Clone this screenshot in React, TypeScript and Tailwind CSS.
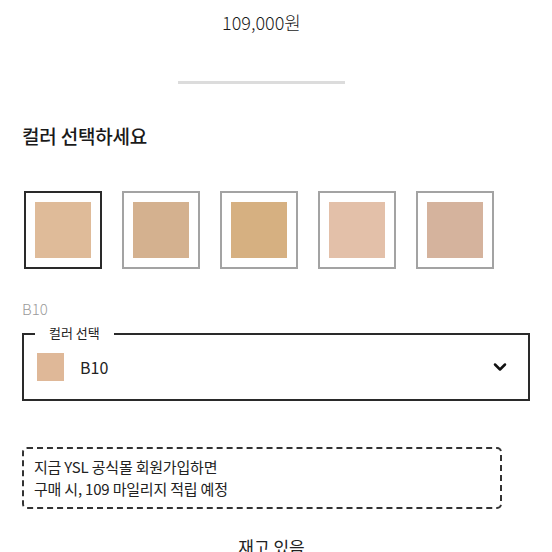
import React from 'react';
import { ChevronDown } from 'lucide-react';

const swatches = [
  { code: 'B10', color: '#dfbb99' },
  { code: 'B20', color: '#d4b18f' },
  { code: 'B30', color: '#d6b081' },
  { code: 'BR10', color: '#e3c0a9' },
  { code: 'BR20', color: '#d5b39d' },
];

const App = () => {
  const selected = 0;

  return (
    <div className="w-[552px] h-[552px] overflow-hidden bg-white text-[#1a1a1a] font-['Noto_Sans_CJK_KR','Noto_Sans',sans-serif]">
      {/* Price + divider */}
      <div className="w-[523px] flex flex-col items-center pt-[10px]">
        <p className="text-[18px] leading-[24px] font-light">109,000원</p>
        <div className="mt-[47px] w-[167px] h-[3px] bg-[#dcdcdc]"></div>
      </div>

      <div className="px-[22px]">
        <h2 className="mt-[40px] text-[19px] leading-[24px] font-medium tracking-[-0.2px]">컬러 선택하세요</h2>

        {/* Shade swatches */}
        <div className="mt-[43px] pl-[2px] flex gap-[20px]">
          {swatches.map((s, i) => (
            <button
              key={s.code}
              className={`w-[78px] h-[78px] border-2 bg-white flex items-center justify-center ${
                i === selected ? 'border-[#2a2a2a]' : 'border-[#a3a3a3]'
              }`}
            >
              <span className="w-[56px] h-[56px]" style={{ backgroundColor: s.color }}></span>
            </button>
          ))}
        </div>

        <p className="mt-[30px] text-[15px] leading-[20px] font-light text-[#9a9a9a]">B10</p>

        {/* Select box */}
        <div className="relative mt-[14px] w-[508px] h-[68px] border-2 border-[#2a2a2a] flex items-center pl-[13px] pr-[18px]">
          <span className="absolute -top-[11px] left-[11px] bg-white px-[14px] text-[13px] leading-[18px] text-[#222]">
            컬러 선택
          </span>
          <span className="w-[27px] h-[28px] bg-[#dfb898]"></span>
          <span className="ml-[16px] text-[16px] leading-[22px] text-[#222]">B10</span>
          <ChevronDown className="ml-auto text-[#111]" size={20} strokeWidth={3} />
        </div>

        {/* Membership notice */}
        <div className="mt-[46px] w-[480px] h-[62px] border-2 border-dashed border-[#333] rounded-[5px] px-[10px] py-[7px] text-[15px] leading-[22px] text-[#222] tracking-[-0.2px]">
          <p>지금 YSL 공식몰 회원가입하면</p>
          <p>구매 시, 109 마일리지 적립 예정</p>
        </div>

        <p className="mt-[26px] w-[499px] text-center text-[17px] leading-[24px] text-[#222]">재고 있음</p>
      </div>
    </div>
  );
};

export default App;
